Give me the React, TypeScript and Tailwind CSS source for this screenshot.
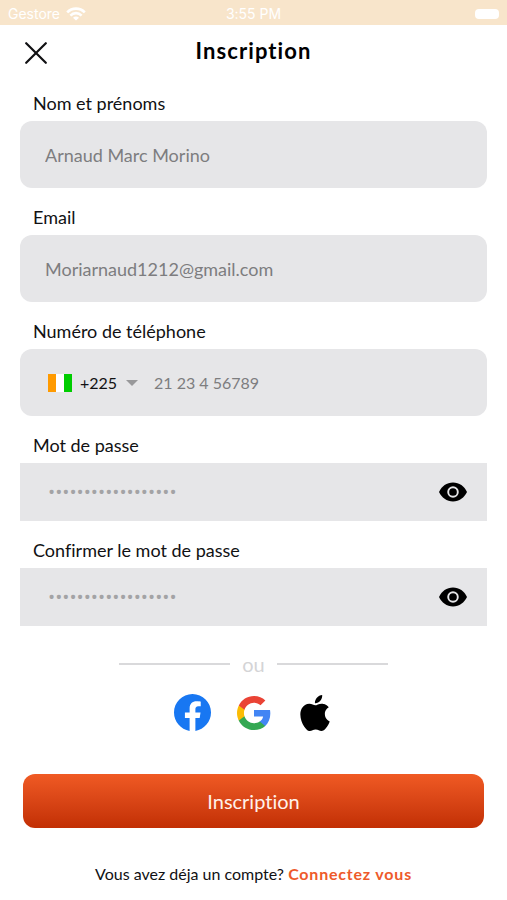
import type { ReactNode } from 'react'

function WifiIcon() {
  return (
    <svg viewBox="0 0 20 14" className="h-3.5 w-5" fill="none" stroke="currentColor" strokeWidth="2.6" aria-hidden="true">
      <path d="M1.2 5.4C3.6 2.9 6.6 1.6 10 1.6s6.4 1.3 8.8 3.8" />
      <path d="M4.4 8.6C6 7 7.9 6.1 10 6.1s4 .9 5.6 2.5" />
      <path d="M10 13.6 7 10.7c.8-.8 1.9-1.2 3-1.2s2.2.4 3 1.2z" fill="currentColor" stroke="none" />
    </svg>
  )
}

function EyeIcon() {
  return (
    <svg viewBox="0 0 28 20" className="h-5 w-7" aria-hidden="true">
      <path d="M0 10C2.6 4.4 7.800.600 14 .600S25.400 4.400 28 10c-2.600 5.600-7.800 9.400-14 9.400S2.600 15.600 0 10z" fill="#000" />
      <circle cx="14" cy="10" r="4.800" fill="#000" stroke="#e6e6e8" strokeWidth="1.900" />
    </svg>
  )
}

function FacebookLogo() {
  return (
    <svg viewBox="0 0 24 24" className="size-[37px]" aria-hidden="true">
      <path
        fill="#1877f2"
        d="M24 12.073c0-6.627-5.373-12-12-12s-12 5.373-12 12c0 5.990 4.388 10.954 10.125 11.854v-8.385H7.078v-3.470h3.047V9.430c0-3.007 1.792-4.669 4.533-4.669 1.312 0 2.686.235 2.686.235v2.953H15.830c-1.491 0-1.956.925-1.956 1.874v2.250h3.328l-.532 3.470h-2.796v8.385C19.612 23.027 24 18.062 24 12.073z"
      />
    </svg>
  )
}

function GoogleLogo() {
  return (
    <svg viewBox="1 1 22 22" className="size-[34px]" aria-hidden="true">
      <path fill="#4285f4" d="M22.560 12.250c0-.780-.070-1.530-.200-2.250H12v4.260h5.920c-.260 1.370-1.040 2.530-2.210 3.310v2.770h3.570c2.080-1.920 3.280-4.740 3.280-8.090z" />
      <path fill="#34a853" d="M12 23c2.970 0 5.460-.980 7.280-2.660l-3.570-2.770c-.980.660-2.230 1.060-3.710 1.060-2.860 0-5.290-1.930-6.160-4.530H2.180v2.840C3.990 20.530 7.700 23 12 23z" />
      <path fill="#fbbc05" d="M5.840 14.090c-.220-.660-.350-1.360-.350-2.090s.130-1.430.350-2.090V7.070H2.180C1.430 8.550 1 10.220 1 12s.430 3.450 1.180 4.930l3.660-2.840z" />
      <path fill="#ea4335" d="M12 5.380c1.620 0 3.060.560 4.210 1.640l3.150-3.150C17.450 2.090 14.970 1 12 1 7.700 1 3.990 3.470 2.180 7.070l3.660 2.840c.870-2.600 3.300-4.530 6.160-4.530z" />
    </svg>
  )
}

function AppleLogo() {
  return (
    <svg viewBox="2 0 20 24" className="h-9 w-[30px]" aria-hidden="true">
      <path
        fill="#000"
        d="M12.152 6.896c-.948 0-2.415-1.078-3.960-1.040-2.040.027-3.910 1.183-4.961 3.014-2.117 3.675-.546 9.103 1.519 12.090 1.013 1.454 2.208 3.090 3.792 3.039 1.520-.065 2.090-.987 3.935-.987 1.831 0 2.350.987 3.960.948 1.637-.026 2.676-1.480 3.676-2.948 1.156-1.688 1.636-3.325 1.662-3.415-.039-.013-3.182-1.221-3.220-4.857-.026-3.040 2.480-4.494 2.597-4.559-1.429-2.090-3.623-2.324-4.390-2.376-2-.156-3.675 1.090-4.610 1.090zM15.530 3.830c.843-1.012 1.400-2.427 1.245-3.830-1.207.052-2.662.805-3.532 1.818-.780.896-1.454 2.338-1.273 3.714 1.338.104 2.715-.688 3.559-1.701"
      />
    </svg>
  )
}

const socials = [
  { name: 'Facebook', Logo: FacebookLogo },
  { name: 'Google', Logo: GoogleLogo },
  { name: 'Apple', Logo: AppleLogo },
]

function Field({ id, label, children }: { id: string; label: string; children: ReactNode }) {
  return (
    <div>
      <label htmlFor={id} className="mb-1.5 block pl-[13px] text-lg leading-6">
        {label}
      </label>
      {children}
    </div>
  )
}

function TextField({ id, label, type, placeholder }: { id: string; label: string; type: string; placeholder: string }) {
  return (
    <Field id={id} label={label}>
      <input
        id={id}
        type={type}
        placeholder={placeholder}
        className="block h-[67px] w-full rounded-xl bg-[#e6e6e8] px-[25px] text-lg outline-none placeholder:text-[#7d7d7f]"
      />
    </Field>
  )
}

function PasswordField({ id, label }: { id: string; label: string }) {
  return (
    <Field id={id} label={label}>
      <div className="flex h-[58px] items-center bg-[#e6e6e8] pr-5 pl-7">
        <input
          id={id}
          type="password"
          placeholder="••••••••••••••••••"
          className='min-w-0 flex-1 bg-transparent font-["Open_Sans",sans-serif] text-[19px] outline-none placeholder:text-[#a3a3a5]'
        />
        <button type="button" aria-label="Afficher le mot de passe">
          <EyeIcon />
        </button>
      </div>
    </Field>
  )
}

export default function App() {
  return (
    <div className='min-h-screen bg-white font-["Lato",sans-serif] text-[#111113] [font-variant-ligatures:none]'>
      <div className='grid h-[25px] grid-cols-3 items-center bg-[#f8e5cb] px-2 pt-0.5 font-["Inter",sans-serif] text-sm text-white'>
        <div className="flex items-center gap-1.5">
          <span>Gestore</span>
          <WifiIcon />
        </div>
        <span className="text-center">3:55 PM</span>
        <div className="h-2.5 w-6 justify-self-end rounded-sm bg-white" />
      </div>

      <header className="grid h-14 grid-cols-[32px_1fr_32px] items-center px-5">
        <button type="button" aria-label="Fermer" className="flex justify-center">
          <svg viewBox="0 0 22 22" className="size-[22px]" fill="none" stroke="#111113" strokeWidth="2.200" strokeLinecap="round" aria-hidden="true">
            <path d="M1.200 1.200l19.600 19.600M20.800 1.200 1.200 20.800" />
          </svg>
        </button>
        <h1 className="pb-1 text-center text-[22px] leading-7 font-bold tracking-wider text-black">Inscription</h1>
      </header>

      <form className="px-5 pt-2.5">
        <div className="flex flex-col gap-[17px]">
          <TextField id="nom" label="Nom et prénoms" type="text" placeholder="Arnaud Marc Morino" />
          <TextField id="email" label="Email" type="email" placeholder="Moriarnaud1212@gmail.com" />
          <Field id="telephone" label="Numéro de téléphone">
            <div className="flex h-[67px] items-center rounded-xl bg-[#e6e6e8] px-7">
              <svg viewBox="0 0 24 18" className="h-[18px] w-6" aria-hidden="true">
                <path fill="#ff9a00" d="M0 0h8v18H0z" />
                <path fill="#fff" d="M8 0h8v18H8z" />
                <path fill="#00cd00" d="M16 0h8v18h-8z" />
              </svg>
              <select aria-label="Indicatif" className="ml-2 appearance-none bg-transparent text-base outline-none">
                <option>+225</option>
              </select>
              <svg viewBox="0 0 12 6" className="ml-2 h-1.5 w-3" fill="#98989a" aria-hidden="true">
                <path d="M0 0h12L6 6z" />
              </svg>
              <input
                id="telephone"
                type="tel"
                placeholder="21 23 4 56789"
                className="ml-4 min-w-0 flex-1 bg-transparent text-base outline-none placeholder:text-[#7d7d7f]"
              />
            </div>
          </Field>
          <PasswordField id="motdepasse" label="Mot de passe" />
          <PasswordField id="confirmation" label="Confirmer le mot de passe" />
        </div>

        <div className="mt-6 flex items-center justify-center gap-3 text-xl leading-7 text-[#d4d4d6]">
          <span className="h-0.5 w-[111px] bg-[#d9d9db]" />
          <span>ou</span>
          <span className="h-0.5 w-[111px] bg-[#d9d9db]" />
        </div>

        <div className="mt-4 flex items-center justify-center gap-6">
          {socials.map(({ name, Logo }) => (
            <button key={name} type="button" aria-label={name} className="flex w-[37px] justify-center">
              <Logo />
            </button>
          ))}
        </div>

        <div className="mt-[43px] px-[3px]">
          <button
            type="submit"
            className="h-[54px] w-full rounded-xl bg-linear-to-b from-[#f05a24] to-[#c22f04] text-xl text-[#fff1ea]"
          >
            Inscription
          </button>
        </div>
      </form>

      <p className="mt-[34px] text-center text-base leading-6">
        Vous avez déja un compte?{' '}
        <a href="#connexion" className="font-bold tracking-wider text-[#ee5a2a]">
          Connectez vous
        </a>
      </p>
    </div>
  )
}
